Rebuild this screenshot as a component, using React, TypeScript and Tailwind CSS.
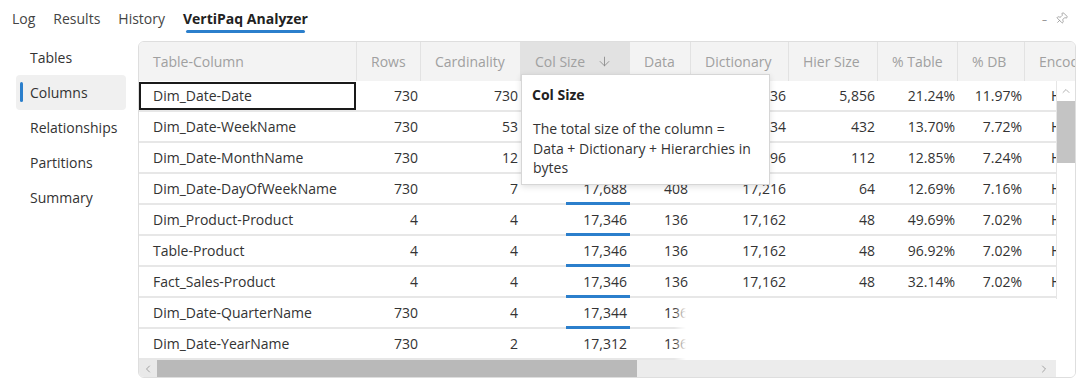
import React from "react";
import { ArrowDown, Pin, ChevronUp, ChevronLeft, ChevronRight } from "lucide-react";

const widths = [
  "w-[218px]",
  "w-[64px]",
  "w-[100px]",
  "w-[109px]",
  "w-[61px]",
  "w-[98px]",
  "w-[89px]",
  "w-[80px]",
  "w-[67px]",
  "w-[120px]",
];

const headers = [
  "Table-Column",
  "Rows",
  "Cardinality",
  "Col Size",
  "Data",
  "Dictionary",
  "Hier Size",
  "% Table",
  "% DB",
  "Encoding",
];

const rows: string[][] = [
  ["Dim_Date-Date", "730", "730", "27,576", "2,984", "18,736", "5,856", "21.24%", "11.97%", "HASH"],
  ["Dim_Date-WeekName", "730", "53", "18,274", "408", "17,434", "432", "13.70%", "7.72%", "HASH"],
  ["Dim_Date-MonthName", "730", "12", "17,816", "408", "17,296", "112", "12.85%", "7.24%", "HASH"],
  ["Dim_Date-DayOfWeekName", "730", "7", "17,688", "408", "17,216", "64", "12.69%", "7.16%", "HASH"],
  ["Dim_Product-Product", "4", "4", "17,346", "136", "17,162", "48", "49.69%", "7.02%", "HASH"],
  ["Table-Product", "4", "4", "17,346", "136", "17,162", "48", "96.92%", "7.02%", "HASH"],
  ["Fact_Sales-Product", "4", "4", "17,346", "136", "17,162", "48", "32.14%", "7.02%", "HASH"],
  ["Dim_Date-QuarterName", "730", "4", "17,344", "136", "17,160", "48", "12.68%", "7.02%", "HASH"],
  ["Dim_Date-YearName", "730", "2", "17,312", "136", "17,128", "48", "12.66%", "7.01%", "HASH"],
];

const navItems = ["Tables", "Columns", "Relationships", "Partitions", "Summary"];

export default function App() {
  return (
    <div
      className="relative w-[1080px] h-[383px] overflow-hidden bg-white text-[#333333] text-[14px]"
      style={{ fontFamily: '"Open Sans", "Noto Sans", sans-serif' }}
    >
      {/* Top tabs */}
      <div className="flex h-[40px] items-start justify-between pl-[12px] pr-[12px]">
        <div className="flex gap-[18px] pt-[8px] text-[14px] leading-[22px]">
          <span className="text-[#444]">Log</span>
          <span className="text-[#444]">Results</span>
          <span className="text-[#444]">History</span>
          <span className="flex flex-col items-center">
            <span className="font-bold text-[#222]">VertiPaq Analyzer</span>
            <span className="h-[3px] w-[119px] rounded-full bg-[#2b7fcc]" />
          </span>
        </div>
        <div className="flex items-center gap-[8px] pt-[12px] text-[#8a8a8a]">
          <span className="text-[10px] leading-none">–</span>
          <Pin size={13} strokeWidth={1.3} className="rotate-45" />
        </div>
      </div>

      <div className="flex">
        {/* Left nav */}
        <div className="w-[138px] flex flex-col">
          {navItems.map((n) => (
            <div
              key={n}
              className={
                n === "Columns"
                  ? "relative ml-[16px] w-[110px] h-[35px] flex items-center pl-[14px] rounded-[4px] bg-[#f0f0f0]"
                  : "ml-[16px] w-[110px] h-[35px] flex items-center pl-[14px]"
              }
            >
              {n === "Columns" && (
                <span className="absolute left-[4px] top-[7px] h-[20px] w-[3px] rounded-full bg-[#2b7fcc]" />
              )}
              <span>{n}</span>
            </div>
          ))}
        </div>

        {/* Table */}
        <div className="relative mt-[1px] w-[938px] h-[337px] rounded-[6px] border border-[#dedede] overflow-hidden flex flex-col">
          {/* header */}
          <div className="flex h-[39px] shrink-0 bg-[#f3f3f3] text-[#a0a0a0] whitespace-nowrap">
            {headers.map((h, i) => (
              <div
                key={h}
                className={
                  widths[i] +
                  " shrink-0 h-full flex items-center pl-[14px] border-r border-[#e2e2e2] " +
                  (i === 3 ? "bg-[#e2e2e2] gap-[12px]" : "")
                }
              >
                <span>{h}</span>
                {i === 3 && <ArrowDown size={15} strokeWidth={1.4} className="text-[#8a8a8a]" />}
              </div>
            ))}
          </div>

          {/* body */}
          <div className="flex h-[279px] shrink-0">
            <div className="flex-1 overflow-hidden">
              {rows.map((r, ri) => (
                <div key={ri} className="flex h-[31px] border-b-2 border-[#e7e7e7] whitespace-nowrap">
                  {r.map((c, ci) => (
                    <div
                      key={ci}
                      className={
                        widths[ci] +
                        " shrink-0 relative h-full flex items-center " +
                        (ci === 0
                          ? "pl-[14px]"
                          : ci === 9
                          ? "pl-[26px]"
                          : "justify-end pr-[3px]")
                      }
                    >
                      {ci === 0 && ri === 0 && (
                        <span className="absolute left-0 top-[1px] right-[1px] bottom-0 border-2 border-[#1a1a1a]" />
                      )}
                      <span>{c}</span>
                      {ci === 3 && ri < 8 && (
                        <span className="absolute right-0 bottom-[-2px] h-[3px] w-[64px] bg-[#2b7fcc]" />
                      )}
                    </div>
                  ))}
                </div>
              ))}
            </div>
            {/* vertical scrollbar */}
            <div className="w-[19px] shrink-0 flex flex-col border-l border-[#e6e6e6] bg-white">
              <div className="h-[20px] flex items-center justify-center text-[#9a9a9a]">
                <ChevronUp size={12} strokeWidth={1.5} />
              </div>
              <div className="h-[62px] bg-[#c4c4c4]" />
              <div className="flex-1 bg-white" />
            </div>
          </div>

          {/* horizontal scrollbar */}
          <div className="flex h-[18px] shrink-0">
            <div className="w-[18px] bg-[#e9e9e9] flex items-center justify-center text-[#8a8a8a]">
              <ChevronLeft size={12} strokeWidth={1.5} />
            </div>
            <div className="w-[480px] bg-[#b9b9b9]" />
            <div className="flex-1 bg-[#ececec] flex items-center justify-end pr-[6px] text-[#8a8a8a]">
              <ChevronRight size={12} strokeWidth={1.5} />
            </div>
            <div className="w-[19px] bg-white" />
          </div>

          {/* erased region overlay */}
          <div className="absolute left-[535px] top-[257px] w-[383px] h-[61px] bg-[linear-gradient(to_right,rgba(255,255,255,0),white_12px)]" />

          {/* tooltip */}
          <div className="absolute left-[382px] top-[32px] w-[249px] h-[111px] bg-white border border-[#d6d6d6] shadow-[0_2px_6px_rgba(0,0,0,0.12)] px-[10px] pt-[10px]">
            <div className="font-bold text-[#222] leading-[20px]">Col Size</div>
            <div className="mt-[14px] pl-[1px] leading-[19.5px] text-[#333]">
              The total size of the column = Data + Dictionary + Hierarchies in bytes
            </div>
          </div>
        </div>
      </div>
    </div>
  );
}
